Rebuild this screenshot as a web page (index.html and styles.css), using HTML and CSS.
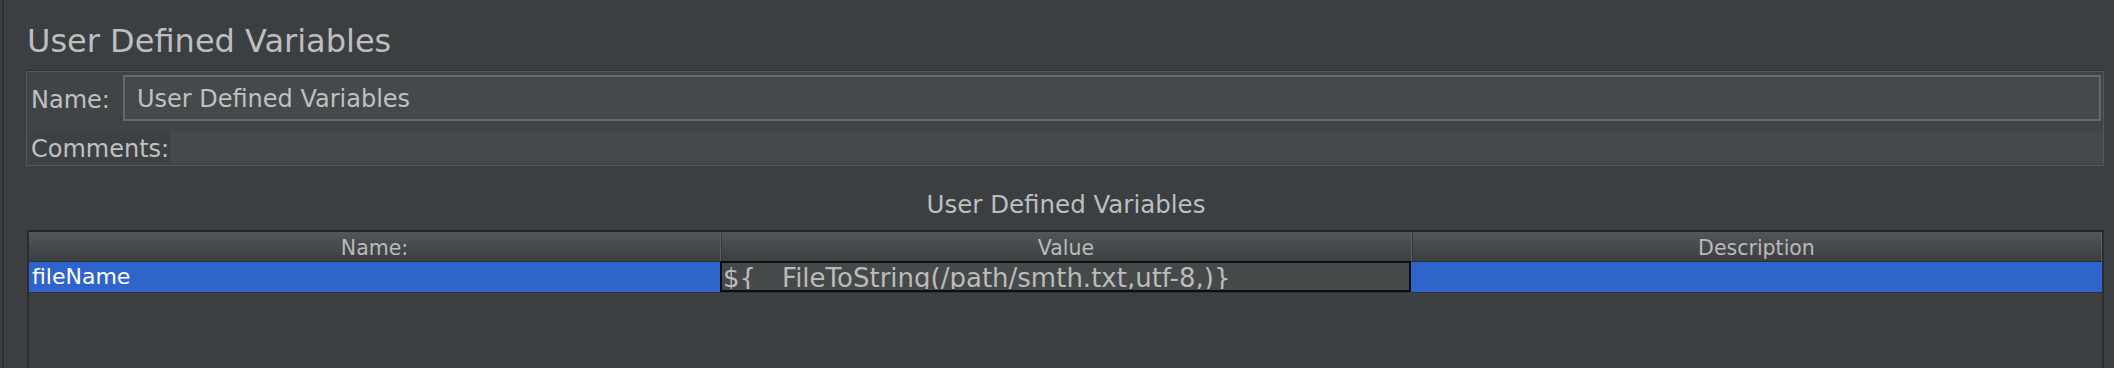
FILE: index.html
```html
<!DOCTYPE html>
<html>
<head>
<meta charset="utf-8">
<link rel="stylesheet" href="styles.css">
</head>
<body>
<div class="frame">
  <h1 class="title">User Defined Variables</h1>
  <div class="panel">
    <div class="row name-row">
      <span class="label">Name:</span>
      <div class="field boxed">User Defined Variables</div>
    </div>
    <div class="row comments-row">
      <span class="label">Comments:</span>
      <div class="field flat"></div>
    </div>
  </div>
  <div class="caption">User Defined Variables</div>
  <div class="table">
    <div class="thead">
      <div class="th">Name:</div>
      <div class="th">Value</div>
      <div class="th last">Description</div>
    </div>
    <div class="tr selected">
      <div class="td">fileName</div>
      <div class="td editor"><span class="editor-text">${__FileToString(/path/smth.txt,utf-8,)}</span></div>
      <div class="td"></div>
    </div>
  </div>
</div>
</body>
</html>
```
FILE: styles.css
```css
html, body {
  margin: 0;
  padding: 0;
  background: #3c3f41;
  overflow: hidden;
}
body {
  font-family: "DejaVu Sans", "Liberation Sans", sans-serif;
  color: #bbbbbb;
}
.frame {
  height: 368px;
  box-sizing: border-box;
  margin-left: 2px;
  border-left: 2px solid #2c2e30;
  padding: 22px 8px 0 22px;
  display: flex;
  flex-direction: column;
}
.title {
  margin: 0 0 11px 1px;
  font-size: 32px;
  line-height: 38px;
  font-weight: normal;
  color: #bdbebf;
}
.panel {
  margin-right: 2px;
  border: 1px solid #56595b;
  box-shadow: 0 -1px 0 #303234;
  background: #414446;
  padding: 3px 0 2px 4px;
  display: flex;
  flex-direction: column;
  gap: 11px;
}
.row {
  display: flex;
  align-items: center;
}
.label {
  font-size: 24px;
  white-space: nowrap;
  color: #bfc0c1;
}
.name-row {
  height: 46px;
  gap: 13px;
  margin-right: 2px;
}
.name-row .label {
  padding-top: 3px;
}
.comments-row {
  height: 31px;
  gap: 1px;
  background: #3e4143;
}
.comments-row .label {
  padding-top: 2px;
}
.field {
  flex: 1;
  align-self: stretch;
  box-sizing: border-box;
  background: #46494b;
  font-size: 24px;
  color: #bfc0c1;
  display: flex;
  align-items: center;
}
.field.boxed {
  border: 2px solid #66696b;
  padding: 2px 0 0 12px;
}
.caption {
  margin: 24px 0 10px;
  text-align: center;
  font-size: 24.5px;
  line-height: 30px;
  color: #bdbebf;
}
.table {
  flex: 1;
  margin-left: 1px;
  margin-right: 2px;
  border-top: 2px solid #252628;
  border-left: 2px solid #2a2c2e;
  border-right: 2px solid #2a2c2e;
}
.thead, .tr {
  display: grid;
  grid-template-columns: 1fr 1fr 1fr;
}
.thead {
  height: 30px;
  box-sizing: border-box;
  border-bottom: 1px solid #2b2d2f;
  background: linear-gradient(#53565a, #45484b 55%, #3d4042);
}
.th {
  text-align: center;
  font-size: 20.5px;
  line-height: 25px;
  padding-top: 4px;
  border-left: 1px solid #5c5f62;
  box-shadow: inset 1px 0 0 #35383a;
  color: #b9babb;
}
.th:first-child {
  border-left: none;
  box-shadow: none;
}
.th.last {
  border-right: 1px solid #5c5f62;
}
.tr {
  height: 31px;
  box-sizing: border-box;
  border-bottom: 1px solid #2a3246;
}
.tr.selected {
  background: #2f65ca;
}
.td {
  font-size: 22px;
  line-height: 30px;
  padding-left: 3px;
  color: #ffffff;
  white-space: nowrap;
  overflow: hidden;
}
.td.editor {
  box-sizing: border-box;
  height: 31px;
  margin-top: -1px;
  border: 2px solid #0e0e0e;
  background: #45494a;
  padding-left: 1px;
}
.editor-text {
  display: block;
  height: 26px;
  overflow: hidden;
  font-size: 26px;
  line-height: 30px;
  color: #bbbbbb;
}
```
